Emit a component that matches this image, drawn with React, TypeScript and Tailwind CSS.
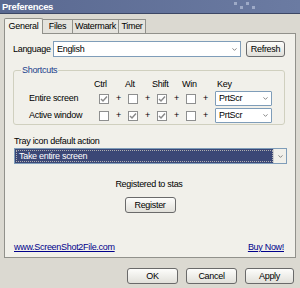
import { ChevronDown } from "lucide-react"

const font = { fontFamily: '"Liberation Sans", Arial, sans-serif' }

function Check({ on }: { on: boolean }) {
  return (
    <div className="w-[10px] h-[10px] border border-[#8e8f8f] bg-white flex items-center justify-center">
      {on && (
        <svg width="8" height="8" viewBox="0 0 8 8">
          <path d="M1 4 L3 6 L7 1.5" stroke="#8a8a8a" strokeWidth="1.5" fill="none" />
        </svg>
      )}
    </div>
  )
}

function Arrow() {
  return (
    <div className="w-[12px] h-full flex items-center justify-center text-[#777]">
      <ChevronDown size={7} strokeWidth={3} />
    </div>
  )
}

function Btn({ label, w }: { label: string; w: string }) {
  return (
    <div className={`${w} h-[16px] rounded-[3px] border border-[#6a6a6a] bg-gradient-to-b from-[#fdfdfb] to-[#e1e0da] flex items-center justify-center text-black`}>
      {label}
    </div>
  )
}

export default function App() {
  const rows = [
    { label: "Entire screen", checks: [true, false, true, false] },
    { label: "Active window", checks: [false, true, true, false] },
  ]

  return (
    <div style={font} className="w-[300px] h-[288px] bg-[#dbd9d1] flex flex-col overflow-hidden text-[9px] tracking-[-0.3px] leading-none text-black">
      {/* title */}
      <div className="h-[14px] bg-gradient-to-r from-[#5a6991] to-[#6b7ba2] border-b border-[#3c4765] flex items-center px-[2px] relative">
        <span className="text-white font-bold text-[9.5px]">Preferences</span>
        <div className="absolute left-[234px] top-[2px] flex gap-[3px] opacity-60">
          <div className="w-[3px] h-[3px] bg-[#c3cce2]" />
          <div className="w-[3px] h-[3px] bg-[#c3cce2] mt-[4px]" />
          <div className="w-[3px] h-[3px] bg-[#c3cce2]" />
          <div className="w-[3px] h-[3px] bg-[#c3cce2] mt-[4px]" />
        </div>
      </div>

      {/* tabs */}
      <div className="pl-[4px] h-[18px] flex items-end mt-[1px]">
        <div className="h-[16px] w-[39px] justify-center border border-b-0 border-[#91918b] bg-[#f1f0ea] rounded-t-[2px] flex items-center relative z-10 -mb-px">General</div>
        <div className="h-[14px] w-[30px] justify-center border border-b-0 border-l-0 border-[#91918b] bg-[#e4e3dd] flex items-center">Files</div>
        <div className="h-[14px] w-[46px] justify-center border border-b-0 border-l-0 border-[#91918b] bg-[#e4e3dd] flex items-center">Watermark</div>
        <div className="h-[14px] w-[27px] justify-center border border-b-0 border-l-0 border-[#91918b] bg-[#e4e3dd] flex items-center">Timer</div>
      </div>

      {/* panel */}
      <div className="mx-[4px] h-[225px] border border-[#91918b] bg-[#f1f0ea] px-[8px] pt-[7px] flex flex-col">
        <div className="flex items-center h-[16px]">
          <span className="w-[40px]">Language</span>
          <div className="w-[188px] h-[16px] border border-[#7f9db9] bg-white flex items-center pl-[3px]">
            <span className="flex-1">English</span>
            <Arrow />
          </div>
          <div className="ml-[5px]">
            <Btn label="Refresh" w="w-[39px]" />
          </div>
        </div>

        {/* shortcuts group */}
        <div className="mt-[13px] h-[55px] mr-[2px] border border-[#d0d0bf] rounded-[3px] relative pl-[15px] pt-[8px]">
          <span className="absolute left-[7px] -top-[5px] bg-[#f1f0ea] px-[1px] text-[#1a3e8c]">Shortcuts</span>
          <div className="flex h-[10px] items-center">
            <span className="w-[65px]" />
            <span className="w-[31px]">Ctrl</span>
            <span className="w-[27px]">Alt</span>
            <span className="w-[30px]">Shift</span>
            <span className="w-[35px]">Win</span>
            <span>Key</span>
          </div>
          {rows.map((r) => (
            <div key={r.label} className="flex items-center h-[15px] mt-[2px]">
              <span className="w-[70px]">{r.label}</span>
              {r.checks.map((c, i) => (
                <div key={i} className="flex items-center">
                  <Check on={c} />
                  <span className="w-[19px] text-center text-[9px]">+</span>
                </div>
              ))}
              <div className="w-[57px] h-[15px] border border-[#7f9db9] bg-white flex items-center pl-[3px] rounded-[1px]">
                <span className="flex-1">PrtScr</span>
                <Arrow />
              </div>
            </div>
          ))}
        </div>

        <div className="mt-[11px] h-[10px] flex items-center pl-[1px]">Tray icon default action</div>
        <div className="mt-[2px] ml-[1px] w-[273px] h-[16px] border border-[#7f9db9] bg-[#3b4776] flex items-center pl-[1px]">
          <span className="flex-1 text-white border border-dotted border-[#b0b0b0] h-[12px] flex items-center pl-[2px]">Take entire screen</span>
          <div className="h-full bg-[#f1f0ea] flex items-center border-l border-[#d0d0d0]">
            <Arrow />
          </div>
        </div>

        <div className="mt-[16px] text-center pr-[2px]">Registered to stas</div>
        <div className="mt-[8px] flex justify-center">
          <Btn label="Register" w="w-[51px]" />
        </div>

        <div className="flex-1" />
        <div className="flex justify-between items-center mb-[5px] pl-[1px] pr-[3px]">
          <span className="underline text-[#00008b]">www.ScreenShot2File.com</span>
          <span className="underline text-[#00008b]">Buy Now!</span>
        </div>
      </div>

      {/* buttons */}
      <div className="flex justify-end gap-[8px] pr-[6px] mt-[10px]">
        <Btn label="OK" w="w-[51px]" />
        <Btn label="Cancel" w="w-[51px]" />
        <Btn label="Apply" w="w-[49px]" />
      </div>
    </div>
  )
}
